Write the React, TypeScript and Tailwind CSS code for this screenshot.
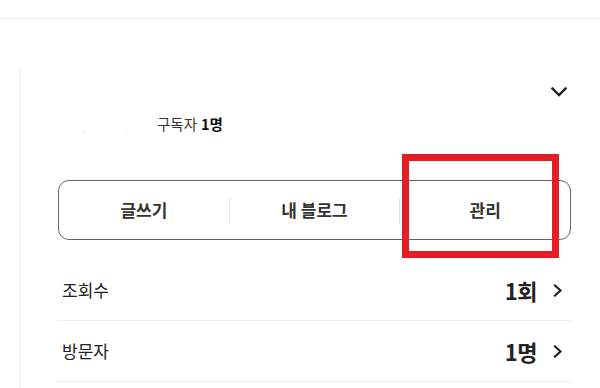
import React from "react";

function ChevronDown() {
  return (
    <svg width="16" height="10" viewBox="0 0 16 10" fill="none">
      <polyline points="1.5,1.5 8,8 14.5,1.5" stroke="#222" strokeWidth="2.4" strokeLinecap="square" strokeLinejoin="miter" />
    </svg>
  );
}

function ChevronRight() {
  return (
    <svg width="10" height="13" viewBox="0 0 10 13" fill="none">
      <polyline points="2,1.5 7.5,6.5 2,11.5" stroke="#222" strokeWidth="2.2" strokeLinecap="square" />
    </svg>
  );
}

export default function App() {
  return (
    <div
      className="relative w-[600px] h-[388px] overflow-hidden bg-white"
      style={{ fontFamily: '"Noto Sans CJK KR", "Noto Sans", sans-serif' }}
    >
      <div className="h-[19px] border-b border-[#ececec]" />
      <div className="mt-[49px] ml-[20px] border-l border-[#ededed] pl-[37px] pr-[29px] h-[400px]">
        <div className="h-[46px] flex items-start justify-end pt-[19px] pr-[4px]">
          <ChevronDown />
        </div>
        <div className="h-[20px] flex items-center text-[14.5px] leading-[20px] text-[#333]">
          <div className="relative w-[99px] h-[20px] shrink-0">
            <span className="absolute left-[25px] top-[18px] w-[1px] h-[1px] bg-[#bbb]" />
            <span className="absolute left-[68px] top-[15px] w-[1px] h-[1px] bg-[#ccc]" />
          </div>
          <span>구독자</span>
          <span className="ml-[4px] font-bold text-[#111]">1명</span>
        </div>
        <div className="mt-[46px] h-[60px] border border-[#666] rounded-[11px] flex items-center">
          <div className="flex-1 text-center text-[17px] font-bold text-[#333]">글쓰기</div>
          <div className="w-px h-[25px] bg-[#e2e2e2]" />
          <div className="flex-1 text-center text-[17px] font-bold text-[#333]">내 블로그</div>
          <div className="w-px h-[25px] bg-[#e2e2e2]" />
          <div className="flex-1 text-center text-[17px] font-bold text-[#333]">관리</div>
        </div>
        <div className="mt-[20px] -ml-px">
          <div className="h-[61px] border-b border-[#ededed] flex items-center justify-between pl-[5px] pr-[8px]">
            <span className="text-[17px] text-[#222]">조회수</span>
            <div className="flex items-center gap-[16px]">
              <span className="text-[22px] font-bold text-[#222] tracking-[-0.5px]">1회</span>
              <ChevronRight />
            </div>
          </div>
          <div className="h-[61px] border-b border-[#ededed] flex items-center justify-between pl-[5px] pr-[8px]">
            <span className="text-[17px] text-[#222]">방문자</span>
            <div className="flex items-center gap-[16px]">
              <span className="text-[22px] font-bold text-[#222] tracking-[-0.5px]">1명</span>
              <ChevronRight />
            </div>
          </div>
        </div>
      </div>
      <div className="absolute left-[402px] top-[154px] w-[157px] h-[104px] border-[7px] border-[#e61e24]" />
    </div>
  );
}
